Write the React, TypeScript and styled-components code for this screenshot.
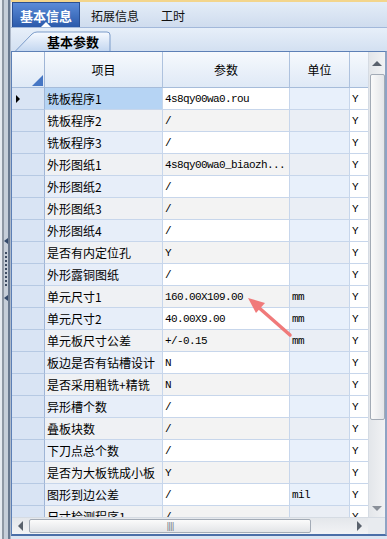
import React from 'react';
import styled, { createGlobalStyle } from 'styled-components';

const colors = {
  frame: '#5d80b6',
  gridLine: '#c7d6eb',
  headLine: '#aec2de',
  rowHead: '#d9e4f4',
  itemOdd: '#e7eef9',
  itemEven: '#eff1f4',
  valueOdd: '#ffffff',
  valueEven: '#f3f3f3',
  unitOdd: '#e8f0fb',
  unitEven: '#eaeef5',
  selected: '#b6d4f4',
  arrow: '#f07a7a',
};

const GlobalStyle = createGlobalStyle`
  *, *::before, *::after { box-sizing: border-box; }
  html, body { margin: 0; padding: 0; background: #dbe5f2; }
  body { font-family: "Noto Sans CJK SC", "Noto Sans", sans-serif; color: #000; }
`;

const Page = styled.div`
  position: relative;
  width: 387px;
  height: 539px;
  display: flex;
  overflow: hidden;
  background: #dbe5f2;
`;

const Splitter = styled.div`
  width: 11px;
  flex-shrink: 0;
  display: flex;
  flex-direction: column;
  align-items: center;
  justify-content: center;
  padding-left: 1px;
  background: linear-gradient(
    to right,
    #e6eaf0 0,
    #e6eaf0 2px,
    #8f98a4 2px,
    #8f98a4 4px,
    #c6ced9 4px,
    #c6ced9 8px,
    #6a798f 8px,
    #6a798f 10px,
    #aeb9c9 10px
  );
`;

const SplitArrow = styled.div`
  width: 0;
  height: 0;
  border-top: 3px solid transparent;
  border-bottom: 3px solid transparent;
  border-right: 4px solid #34496a;
`;

const SplitDots = styled.div`
  width: 2px;
  height: 35px;
  margin: 8px 0;
  background: repeating-linear-gradient(#3e4c63 0 2px, transparent 2px 4px);
`;

const Main = styled.div`
  flex: 1;
  display: flex;
  flex-direction: column;
  min-width: 0;
`;

const TabStrip = styled.div`
  height: 28px;
  flex-shrink: 0;
  display: flex;
  padding: 2px 0 0 1px;
  border-top: 0;
  background: linear-gradient(#f3d58c 0, #f3d58c 2px, #e4edf8 2px, #cfdcee 100%);
  border-bottom: 1px solid #a2b8da;
`;

const Tab = styled.div<{ $active?: boolean }>`
  position: relative;
  display: flex;
  align-items: center;
  padding: ${p => (p.$active ? '0 7px' : '0 10px')};
  font-size: ${p => (p.$active ? '13px' : '12px')};
  font-weight: ${p => (p.$active ? 700 : 400)};
  color: ${p => (p.$active ? '#fff' : '#111')};
  background: ${p => (p.$active ? 'linear-gradient(#5b8bd8, #2b5aab)' : 'transparent')};
  border: ${p => (p.$active ? '1px solid #2a4f92' : '1px solid transparent')};
  border-bottom: 0;

  &::after {
    content: '';
    display: ${p => (p.$active ? 'block' : 'none')};
    position: absolute;
    left: 50%;
    bottom: 0;
    margin-left: -5px;
    border-left: 5px solid transparent;
    border-right: 5px solid transparent;
    border-bottom: 5px solid #fff;
  }
`;

const SubBand = styled.div`
  height: 23px;
  flex-shrink: 0;
  display: flex;
  align-items: flex-end;
  padding-left: 4px;
  background: linear-gradient(#e7eff9, #d3e0f1);
`;

const SubTab = styled.div`
  position: relative;
  width: 96px;
  height: 20px;
  display: flex;
  align-items: center;
  justify-content: center;
  padding-left: 20px;
  font-size: 13px;
  font-weight: 700;

  svg {
    position: absolute;
    left: 0;
    top: 0;
  }

  span {
    position: relative;
  }
`;

const Frame = styled.div`
  flex: 1;
  display: flex;
  flex-direction: column;
  min-height: 0;
  border-top: 1px solid ${colors.frame};
  border-left: 1px solid ${colors.frame};
  border-right: 2px solid #8ea3c4;
  border-bottom: 2px solid #4a6ea8;
  margin-bottom: 3px;
  background: #fff;
`;

const FrameBody = styled.div`
  flex: 1;
  display: flex;
  min-height: 0;
`;

const Viewport = styled.div`
  flex: 1;
  overflow: hidden;
  min-width: 0;
`;

const Row = styled.div<{ $height: number }>`
  display: flex;
  height: ${p => p.$height}px;
  width: 400px;
`;

const HeadCell = styled.div<{ $w: number }>`
  width: ${p => p.$w}px;
  flex-shrink: 0;
  display: flex;
  align-items: center;
  justify-content: center;
  font-size: 12px;
  background: linear-gradient(#f6f9fd, #dfe9f6);
  border-right: 1px solid ${colors.headLine};
  border-bottom: 1px solid #a6bcda;
`;

const CornerCell = styled(HeadCell)`
  align-items: flex-end;
  justify-content: flex-end;
  padding: 0 1px 1px 0;
  border-right-color: #9fb5d6;

  &::after {
    content: '';
    width: 0;
    height: 0;
    border-left: 11px solid transparent;
    border-bottom: 11px solid #4676c4;
  }
`;

const RowHead = styled.div`
  width: 33px;
  flex-shrink: 0;
  display: flex;
  align-items: center;
  padding-left: 4px;
  background: ${colors.rowHead};
  border-right: 1px solid #9fb5d6;
  border-bottom: 1px solid #b6c9e3;
`;

const RowMarker = styled.div`
  width: 0;
  height: 0;
  border-top: 4px solid transparent;
  border-bottom: 4px solid transparent;
  border-left: 4px solid #000;
`;

const Cell = styled.div<{ $w: number; $bg: string; $mono?: boolean }>`
  width: ${p => p.$w}px;
  flex-shrink: 0;
  display: flex;
  align-items: center;
  padding-left: 2px;
  overflow: hidden;
  white-space: nowrap;
  background: ${p => p.$bg};
  border-right: 1px solid ${colors.gridLine};
  border-bottom: 1px solid ${colors.gridLine};
  font-family: ${p =>
    p.$mono ? '"Liberation Mono", "DejaVu Sans Mono", monospace' : '"Noto Sans CJK SC", sans-serif'};
  font-size: ${p => (p.$mono ? '11px' : '12px')};
  letter-spacing: ${p => (p.$mono ? '-0.6px' : '0')};
`;

const VScroll = styled.div`
  width: 17px;
  flex-shrink: 0;
  display: flex;
  flex-direction: column;
  align-items: center;
  background: linear-gradient(to right, #e3e6ea, #f1f2f4);
  border-left: 1px solid #d5dbe3;
`;

const ScrollButton = styled.div<{ $size: number }>`
  width: ${p => p.$size}px;
  height: ${p => p.$size}px;
  flex-shrink: 0;
  display: flex;
  align-items: center;
  justify-content: center;
`;

const Arrow = styled.div<{ $dir: 'up' | 'down' | 'left' | 'right' }>`
  width: 0;
  height: 0;
  ${p =>
    p.$dir === 'up'
      ? 'border-left: 5px solid transparent; border-right: 5px solid transparent; border-bottom: 5px solid #59616c;'
      : p.$dir === 'down'
      ? 'border-left: 5px solid transparent; border-right: 5px solid transparent; border-top: 5px solid #8a9099;'
      : p.$dir === 'left'
      ? 'border-top: 5px solid transparent; border-bottom: 5px solid transparent; border-right: 5px solid #59616c;'
      : 'border-top: 5px solid transparent; border-bottom: 5px solid transparent; border-left: 5px solid #59616c;'}
`;

const VThumb = styled.div`
  width: 15px;
  height: 346px;
  border: 1px solid #a3abb6;
  border-radius: 2px;
  background: linear-gradient(to right, #fafafa, #e4e6e9);
`;

const VSpace = styled.div`
  flex: 1;
`;

const HScrollRow = styled.div`
  height: 17px;
  flex-shrink: 0;
  display: flex;
`;

const HScroll = styled.div`
  flex: 1;
  display: flex;
  align-items: center;
  background: linear-gradient(#e4e7eb, #f2f3f5);
  border-top: 1px solid #d5dbe3;
`;

const HThumb = styled.div`
  width: 282px;
  height: 14px;
  display: flex;
  align-items: center;
  justify-content: center;
  border: 1px solid #a3abb6;
  border-radius: 2px;
  background: linear-gradient(#fbfbfb, #e2e4e7);
  font-family: "DejaVu Sans", sans-serif;
  font-size: 8px;
  letter-spacing: -1px;
  color: #6d7580;
`;

const Corner = styled.div`
  width: 17px;
  background: #e8ebef;
  border-top: 1px solid #d5dbe3;
`;

const Overlay = styled.svg`
  position: absolute;
  left: 0;
  top: 0;
  pointer-events: none;
`;

type Item = { name: string; value: string; unit?: string };

const items: Item[] = [
  { name: '铣板程序1', value: '4s8qy00wa0.rou' },
  { name: '铣板程序2', value: '/' },
  { name: '铣板程序3', value: '/' },
  { name: '外形图纸1', value: '4s8qy00wa0_biaozh...' },
  { name: '外形图纸2', value: '/' },
  { name: '外形图纸3', value: '/' },
  { name: '外形图纸4', value: '/' },
  { name: '是否有内定位孔', value: 'Y' },
  { name: '外形露铜图纸', value: '/' },
  { name: '单元尺寸1', value: '160.00X109.00', unit: 'mm' },
  { name: '单元尺寸2', value: '40.00X9.00', unit: 'mm' },
  { name: '单元板尺寸公差', value: '+/-0.15', unit: 'mm' },
  { name: '板边是否有钻槽设计', value: 'N' },
  { name: '是否采用粗铣+精铣', value: 'N' },
  { name: '异形槽个数', value: '/' },
  { name: '叠板块数', value: '/' },
  { name: '下刀点总个数', value: '/' },
  { name: '是否为大板铣成小板', value: 'Y' },
  { name: '图形到边公差', value: '/', unit: 'mil' },
  { name: '尺寸检测程序1', value: '/' },
];

const W = { item: 118, value: 127, unit: 60, flag: 62 };

export default function App() {
  return (
    <Page>
      <GlobalStyle />
      <Splitter>
        <SplitArrow />
        <SplitDots />
        <SplitArrow />
      </Splitter>

      <Main>
        <TabStrip>
          <Tab $active>基本信息</Tab>
          <Tab>拓展信息</Tab>
          <Tab>工时</Tab>
        </TabStrip>

        <SubBand>
          <SubTab>
            <svg width="96" height="20" viewBox="0 0 96 20">
              <defs>
                <linearGradient id="subtab" x1="0" y1="0" x2="0" y2="1">
                  <stop offset="0" stopColor="#f7faff" />
                  <stop offset="1" stopColor="#c4d7f0" />
                </linearGradient>
              </defs>
              <path
                d="M0.5 20 L17 3 Q19 1 22 1 L92 1 Q95 1 95 4 L95 20"
                fill="url(#subtab)"
                stroke="#7b9bc9"
                strokeWidth="1"
              />
            </svg>
            <span>基本参数</span>
          </SubTab>
        </SubBand>

        <Frame>
          <FrameBody>
            <Viewport>
              <Row $height={36}>
                <CornerCell $w={33} />
                <HeadCell $w={W.item}>项目</HeadCell>
                <HeadCell $w={W.value}>参数</HeadCell>
                <HeadCell $w={W.unit}>单位</HeadCell>
                <HeadCell $w={W.flag} />
              </Row>
              {items.map((it, i) => {
                const even = i % 2 === 1;
                return (
                  <Row $height={22} key={it.name}>
                    <RowHead>{i === 0 && <RowMarker />}</RowHead>
                    <Cell
                      $w={W.item}
                      $bg={i === 0 ? colors.selected : even ? colors.itemEven : colors.itemOdd}
                    >
                      {it.name}
                    </Cell>
                    <Cell $w={W.value} $mono $bg={even ? colors.valueEven : colors.valueOdd}>
                      {it.value}
                    </Cell>
                    <Cell $w={W.unit} $mono $bg={even ? colors.unitEven : colors.unitOdd}>
                      {it.unit ?? ''}
                    </Cell>
                    <Cell $w={W.flag} $mono $bg="#fff">
                      Y
                    </Cell>
                  </Row>
                );
              })}
            </Viewport>

            <VScroll>
              <ScrollButton $size={22}>
                <Arrow $dir="up" />
              </ScrollButton>
              <VThumb />
              <VSpace />
              <ScrollButton $size={17}>
                <Arrow $dir="down" />
              </ScrollButton>
            </VScroll>
          </FrameBody>

          <HScrollRow>
            <HScroll>
              <ScrollButton $size={17}>
                <Arrow $dir="left" />
              </ScrollButton>
              <HThumb>||||</HThumb>
              <VSpace />
              <ScrollButton $size={17}>
                <Arrow $dir="right" />
              </ScrollButton>
            </HScroll>
            <Corner />
          </HScrollRow>
        </Frame>
      </Main>

      <Overlay width="387" height="539" viewBox="0 0 387 539">
        <line
          x1="290"
          y1="335"
          x2="257"
          y2="306"
          stroke={colors.arrow}
          strokeWidth="3.5"
          strokeLinecap="round"
        />
        <polygon points="248,298 265,303 256,313" fill={colors.arrow} />
      </Overlay>
    </Page>
  );
}
